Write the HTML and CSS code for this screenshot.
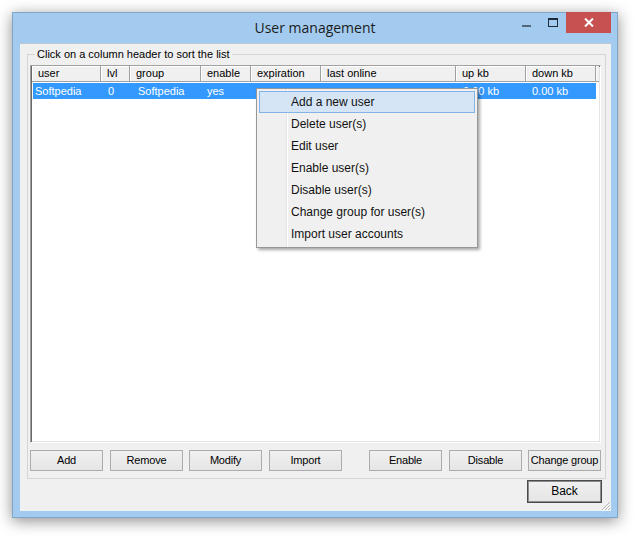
FILE: index.html
```html
<!DOCTYPE html>
<html>
<head>
<meta charset="utf-8">
<link rel="stylesheet" href="styles.css">
</head>
<body>
<div class="window">
  <div class="titlebar">
    <div></div>
    <div class="title">User management</div>
    <div class="caption-buttons">
      <div class="cb cb-min"><span class="min-glyph"></span></div>
      <div class="cb cb-max"><span class="max-glyph"></span></div>
      <div class="cb cb-close">
        <svg width="10" height="9" viewBox="0 0 10 9"><path d="M1 0.5 L9 8.5 M9 0.5 L1 8.5" stroke="#fff" stroke-width="2"/></svg>
      </div>
    </div>
  </div>
  <div class="client">
    <div class="group">
      <div class="legend-line"><span class="legend">Click on a column header to sort the list</span></div>
      <div class="listview">
        <div class="lv-header">
          <div class="hc c1">user</div>
          <div class="hc c2">lvl</div>
          <div class="hc c3">group</div>
          <div class="hc c4">enable</div>
          <div class="hc c5">expiration</div>
          <div class="hc c6">last online</div>
          <div class="hc c7">up kb</div>
          <div class="hc c8">down kb</div>
          <div class="hc c9"></div>
        </div>
        <div class="lv-row selected">
          <div class="rc c1 first">Softpedia</div>
          <div class="rc c2">0</div>
          <div class="rc c3">Softpedia</div>
          <div class="rc c4">yes</div>
          <div class="rc c5"></div>
          <div class="rc c6"></div>
          <div class="rc c7">0.00 kb</div>
          <div class="rc c8">0.00 kb</div>
        </div>
      </div>
      <div class="btn-row">
        <div class="btn b1">Add</div>
        <div class="btn b2">Remove</div>
        <div class="btn b3">Modify</div>
        <div class="btn b4">Import</div>
        <div class="btn b5">Enable</div>
        <div class="btn b6">Disable</div>
        <div class="btn b7">Change group</div>
      </div>
    </div>
    <div class="back-row">
      <div class="btn btn-default">Back</div>
    </div>
    <svg class="grip" width="11" height="11" viewBox="0 0 11 11">
      <path d="M10 2 L2 10 M10 5 L5 10 M10 8 L8 10" stroke="#b8b8b8" stroke-width="1"/>
      <path d="M11 3 L3 11 M11 6 L6 11 M11 9 L9 11" stroke="#ffffff" stroke-width="1"/>
    </svg>
  </div>
</div>

<div class="menu">
  <div class="mi active">Add a new user</div>
  <div class="mi">Delete user(s)</div>
  <div class="mi">Edit user</div>
  <div class="mi">Enable user(s)</div>
  <div class="mi">Disable user(s)</div>
  <div class="mi">Change group for user(s)</div>
  <div class="mi">Import user accounts</div>
</div>
</body>
</html>
```

FILE: styles.css
```css
html, body {
  margin: 0;
  padding: 0;
  background: #ffffff;
}
body {
  width: 638px;
  height: 539px;
  overflow: hidden;
  font-family: "Liberation Sans", Arial, sans-serif;
  font-size: 11px;
  color: #000;
}
.window {
  box-sizing: border-box;
  margin: 12px 0 0 12px;
  width: 606px;
  height: 506px;
  background: #a3cbf0;
  border: 1px solid #7fa5c9;
  box-shadow: 0 3px 14px rgba(0, 0, 0, 0.45);
  display: flex;
  flex-direction: column;
}
.titlebar {
  height: 30px;
  display: grid;
  grid-template-columns: 1fr auto 1fr;
  align-items: start;
}
.title {
  font-family: "Open Sans", "Noto Sans", sans-serif;
  font-size: 14px;
  color: #1b1b1b;
  padding-top: 5px;
  line-height: 20px;
}
.caption-buttons {
  justify-self: end;
  display: flex;
  margin-right: 6px;
  margin-top: -1px;
}
.cb {
  height: 21px;
  display: flex;
  align-items: flex-start;
  justify-content: center;
}
.cb-min {
  width: 26px;
}
.min-glyph {
  display: block;
  width: 9px;
  height: 2px;
  background: #53677c;
  margin-top: 13px;
}
.cb-max {
  width: 27px;
}
.max-glyph {
  display: block;
  box-sizing: border-box;
  width: 10px;
  height: 9px;
  border: 1px solid #1d2a38;
  border-top-width: 2px;
  margin-top: 6px;
}
.cb-close {
  width: 45px;
  background: #c75050;
  align-items: center;
}
.client {
  flex: 1;
  margin: 0 6px 6px 7px;
  background: #f0f0f0;
  border-top: 1px solid #b9c9d8;
  position: relative;
  display: flex;
  flex-direction: column;
}
.group {
  box-sizing: border-box;
  margin: 10px 0 0 7px;
  width: 579px;
  height: 425px;
  padding: 0 4px 0 2px;
  border: 1px solid #d5d5d5;
  display: flex;
  flex-direction: column;
}
.legend-line {
  height: 7px;
  margin-top: -7px;
  padding-left: 5px;
  display: flex;
}
.legend {
  background: #f0f0f0;
  padding: 0 2px;
  line-height: 13px;
  font-size: 11px;
  height: 13px;
}
.listview {
  box-sizing: border-box;
  height: 378px;
  margin-top: 10px;
  background: #fff;
  border-top: 1px solid #a0a0a0;
  border-left: 1px solid #a0a0a0;
  border-right: 1px solid #ffffff;
  border-bottom: 1px solid #ffffff;
  box-shadow: inset 1px 1px 0 #696969, inset -1px -1px 0 #e3e3e3;
  display: flex;
  flex-direction: column;
}
.lv-header {
  display: flex;
  height: 16px;
  margin-left: 1px;
  margin-right: 1px;
}
.hc {
  box-sizing: border-box;
  flex-shrink: 0;
  height: 16px;
  line-height: 15px;
  padding-left: 6px;
  background: #f0f0f0;
  border-right: 1px solid #a0a0a0;
  border-bottom: 1px solid #a0a0a0;
  box-shadow: inset 1px 1px 0 #ffffff;
  white-space: nowrap;
  overflow: hidden;
}
.c1 { width: 69px; }
.c2 { width: 29px; }
.c3 { width: 71px; }
.c4 { width: 50px; }
.c5 { width: 70px; }
.c6 { width: 135px; }
.c7 { width: 70px; }
.c8 { width: 70px; }
.hc.c9 { flex: 1 1 auto; width: auto; padding: 0; border-right: 0; }
.lv-row {
  display: flex;
  margin-top: 1px;
  margin-left: 1px;
  height: 16px;
}
.rc {
  box-sizing: border-box;
  flex-shrink: 0;
  height: 16px;
  line-height: 16px;
  padding-left: 7px;
  white-space: nowrap;
  overflow: hidden;
}
.selected .rc {
  background: #3399ff;
  color: #fff;
}
.rc.first {
  width: 68px;
  margin-left: 1px;
  padding-left: 2px;
}
.rc.c3 { padding-left: 8px; }
.rc.c4 { padding-left: 6px; }
.rc.c8 { padding-left: 6px; }
.btn-row {
  display: flex;
  margin-top: 7px;
}
.btn {
  box-sizing: border-box;
  width: 73px;
  height: 21px;
  line-height: 19px;
  text-align: center;
  border: 1px solid #acacac;
  background: linear-gradient(#f0f0f0, #e5e5e5);
  font-size: 11px;
  letter-spacing: -0.2px;
  white-space: nowrap;
}
.b1, .b3, .b5 { margin-right: 7px; }
.b2, .b6 { margin-right: 6px; }
.b5 { margin-left: auto; }
.back-row {
  display: flex;
  justify-content: flex-end;
  margin-top: 1px;
  margin-right: 9px;
}
.btn-default {
  width: 75px;
  height: 23px;
  line-height: 21px;
  font-size: 12px;
  letter-spacing: 0;
  border: 1px solid #4a4a4a;
  box-shadow: inset 0 0 0 1px #8c8c8c;
}
.grip {
  position: absolute;
  right: 0;
  bottom: 0;
}
.menu {
  position: absolute;
  left: 256px;
  top: 88px;
  box-sizing: border-box;
  width: 222px;
  height: 160px;
  padding: 2px;
  border: 1px solid #979797;
  background-color: #f0f0f0;
  background-image: linear-gradient(to right, transparent 29px, #e2e3e3 29px, #e2e3e3 30px, #ffffff 30px, #ffffff 31px, transparent 31px);
  box-shadow: 2px 2px 3px rgba(0, 0, 0, 0.35);
  font-family: "Liberation Sans", Arial, sans-serif;
  font-size: 12px;
  color: #111;
}
.mi {
  box-sizing: border-box;
  height: 22px;
  line-height: 22px;
  padding-left: 32px;
  white-space: nowrap;
}
.mi.active {
  background: #d5e5f6;
  border: 1px solid #82b4e6;
  line-height: 20px;
  padding-left: 31px;
}
```
